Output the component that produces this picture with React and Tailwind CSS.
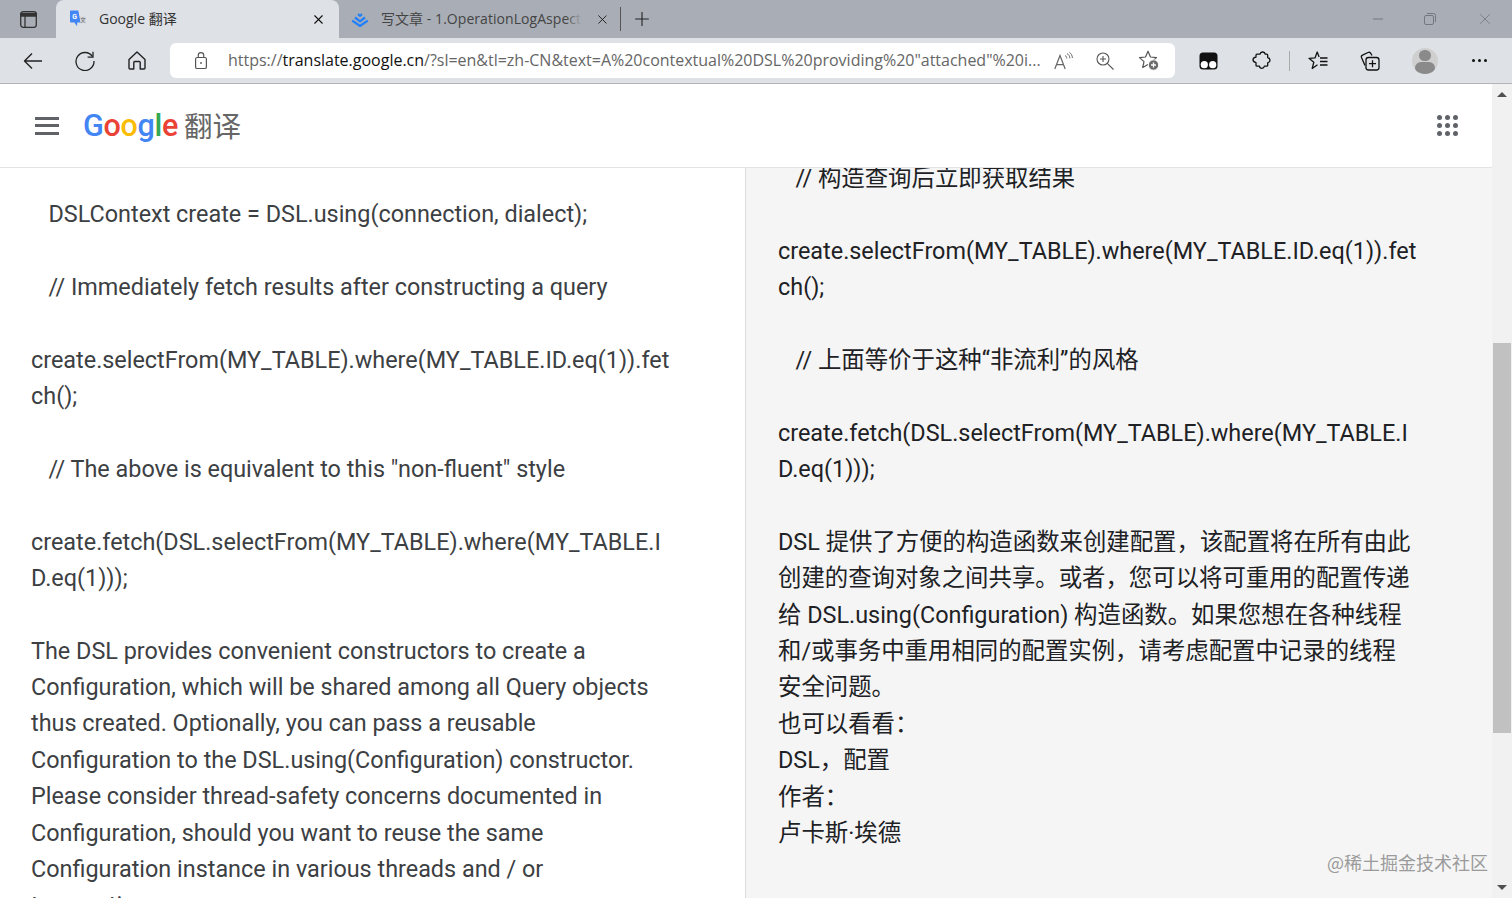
import React from 'react';
import { X, Plus, Minus } from 'lucide-react';

const leftLines = [
  '   DSLContext create = DSL.using(connection, dialect);',
  '',
  '   // Immediately fetch results after constructing a query',
  '',
  'create.selectFrom(MY_TABLE).where(MY_TABLE.ID.eq(1)).fet',
  'ch();',
  '',
  '   // The above is equivalent to this "non-fluent" style',
  '',
  'create.fetch(DSL.selectFrom(MY_TABLE).where(MY_TABLE.I',
  'D.eq(1)));',
  '',
  'The DSL provides convenient constructors to create a',
  'Configuration, which will be shared among all Query objects',
  'thus created. Optionally, you can pass a reusable',
  'Configuration to the DSL.using(Configuration) constructor.',
  'Please consider thread-safety concerns documented in',
  'Configuration, should you want to reuse the same',
  'Configuration instance in various threads and / or',
  'transactions.',
];

const rightLines = [
  '   // 构造查询后立即获取结果',
  '',
  'create.selectFrom(MY_TABLE).where(MY_TABLE.ID.eq(1)).fet',
  'ch();',
  '',
  '   // 上面等价于这种“非流利”的风格',
  '',
  'create.fetch(DSL.selectFrom(MY_TABLE).where(MY_TABLE.I',
  'D.eq(1)));',
  '',
  'DSL 提供了方便的构造函数来创建配置，该配置将在所有由此',
  '创建的查询对象之间共享。或者，您可以将可重用的配置传递',
  '给 DSL.using(Configuration) 构造函数。如果您想在各种线程',
  '和/或事务中重用相同的配置实例，请考虑配置中记录的线程',
  '安全问题。',
  '也可以看看：',
  'DSL，配置',
  '作者：',
  '卢卡斯·埃德',
];

const TextLines = ({ lines }) => (
  <>
    {lines.map((line, i) => (
      <div key={i} className="h-[36.4px] whitespace-pre">{line}</div>
    ))}
  </>
);

const TranslateFavicon = () => (
  <svg width="18" height="18" viewBox="0 0 18 18" className="shrink-0">
    <path d="M1 1.200c0-.5.300-.8.800-.8h7.500l2.200 12H8.300l-.3 3.800-2.600-3.800H1.800c-.5 0-.8-.3-.8-.8z" fill="#4285f4" />
    <path d="M10.800 6.500h6.200v6.500h-3l-1.200 1.800z" fill="#d5d7db" />
    <text x="3.200" y="9" fontSize="7" fontWeight="700" fill="#fff" fontFamily="Roboto, sans-serif">G</text>
    <text x="11.300" y="12" fontSize="5.500" fill="#5f6368" fontFamily="'Noto Sans CJK SC', sans-serif">文</text>
  </svg>
);

const JuejinLogo = () => (
  <svg width="18" height="15" viewBox="0 0 18 15" className="shrink-0" fill="none" stroke="#1e80ff" strokeWidth="2.200">
    <path d="M7 2.200 9 3.800l2-1.600" />
    <path d="M4 5.500 9 9.300l5-3.800" />
    <path d="M1.200 8.600 9 14l7.800-5.400" />
  </svg>
);

const TabIcon = () => (
  <svg width="17" height="17" viewBox="0 0 17 17" fill="none" stroke="#333" strokeWidth="1.300">
    <rect x="0.700" y="0.700" width="15.600" height="15.600" rx="2.500" />
    <path d="M1 2.500h15v2.500H1z" fill="#333" />
    <path d="M5 5v11" />
  </svg>
);

const BackIcon = () => (
  <svg width="20" height="18" viewBox="0 0 20 18" fill="none" stroke="#222" strokeWidth="1.400" strokeLinejoin="round">
    <path d="M19 9H1.500M9 1.500 1.500 9 9 16.500" />
  </svg>
);

const RefreshIcon = () => (
  <svg width="20" height="20" viewBox="0 0 20 20" fill="none" stroke="#222" strokeWidth="1.300">
    <path d="M17.500 5.500A9 9 0 1 0 19 10" />
    <path d="M18 .800v5.400h-5.400" />
  </svg>
);

const HomeIcon = () => (
  <svg width="18" height="19" viewBox="0 0 18 19" fill="none" stroke="#222" strokeWidth="1.400" strokeLinejoin="round">
    <path d="M1 8.500 9 1l8 7.500V17a1 1 0 0 1-1 1h-3.800v-6.500a1 1 0 0 0-1-1H6.800a1 1 0 0 0-1 1V18H2a1 1 0 0 1-1-1z" />
  </svg>
);

const LockIcon = () => (
  <svg width="14" height="18" viewBox="0 0 14 18" fill="none" stroke="#555" strokeWidth="1.200">
    <rect x="1.600" y="5.500" width="10.800" height="11" rx="1.600" />
    <path d="M4.300 5.500V3.300a2.700 2.700 0 0 1 5.400 0v2.200" />
    <circle cx="7" cy="11" r="0.900" fill="#555" stroke="none" />
  </svg>
);

const ReadAloudIcon = () => (
  <svg width="19" height="18" viewBox="0 0 19 18" fill="none" stroke="#666" strokeWidth="1.200">
    <path d="M.800 17 6 3.500 11.200 17M2.500 12.700h7" />
    <path d="M11 3.500c1.100.5 1.700 1.500 1.800 3M13 1.700c1.800.8 2.700 2.300 2.900 4.600M15.400.500c1.900 1.100 2.900 3 3 5.500" strokeWidth="1" />
  </svg>
);

const ZoomPlusIcon = () => (
  <svg width="18" height="18" viewBox="0 0 18 18" fill="none" stroke="#555" strokeWidth="1.100">
    <circle cx="7" cy="7" r="6" />
    <path d="M7 4v6M4 7h6M11.300 11.300 17.500 17.500" />
  </svg>
);

const FavAddIcon = () => (
  <svg width="22" height="21" viewBox="0 0 22 21" fill="none">
    <path d="M10 1.200 12.500 7l6 .6-4.500 4 1.300 5.900L10 14.500l-5.300 3 1.300-5.900-4.500-4 6-.6z" stroke="#555" strokeWidth="1.200" strokeLinejoin="round" />
    <circle cx="15.500" cy="15" r="5.200" fill="#6b6b6b" stroke="#fff" />
    <path d="M15.500 12.500v5M13 15h5" stroke="#fff" strokeWidth="1.300" />
  </svg>
);

const TamperIcon = () => (
  <svg width="19" height="18" viewBox="0 0 19 18">
    <rect x="0.500" y="0.500" width="18" height="17" rx="3.500" fill="#111" />
    <circle cx="5.300" cy="12.700" r="3.600" fill="#fff" />
    <circle cx="13.700" cy="12.700" r="3.600" fill="#fff" />
  </svg>
);

const PuzzleIcon = () => (
  <svg width="19" height="19" viewBox="0 0 19 19" fill="none" stroke="#111" strokeWidth="1.300" strokeLinejoin="round">
    <path d="M8 3.200C8.300 1.700 9.500.900 10.800 1c1.300.1 2.200 1 2.400 2.200h1.500c.6 0 1 .4 1 1v2.300c1.500.4 2.300 1.400 2.300 2.700 0 1.400-.8 2.300-2.300 2.700v2.300c0 .6-.4 1-1 1h-2.300c-.3 1.400-1.300 2.100-2.500 2.100s-2.300-.7-2.500-2.100H5c-.6 0-1-.4-1-1v-2.500C2.300 11.200 1 10.300 1 8.800c0-1.500 1.200-2.500 3-2.700V4.200c0-.6.400-1 1-1z" />
  </svg>
);

const FavListIcon = () => (
  <svg width="20" height="19" viewBox="0 0 20 19" fill="none" stroke="#111" strokeWidth="1.300" strokeLinejoin="round">
    <path d="M9.500 13.800 4.200 17.500l1.600-6.200L1 7.300l6-.4L9.200 1l1.900 5" />
    <path d="M12 7h7.500M12 10.500h7.500M12 14h7.500" />
  </svg>
);

const CollectionsIcon = () => (
  <svg width="20" height="20" viewBox="0 0 20 20" fill="none" stroke="#111" strokeWidth="1.300">
    <path d="M5 14.500 1.500 6.500c-.4-1 0-2 1-2.400l5.500-2.600c1.200-.5 2.400 0 2.900 1l1 2" />
    <rect x="6" y="6.500" width="13" height="12.500" rx="2.500" />
    <path d="M12.500 9.300v6.900M9 12.700h7" />
  </svg>
);

const AvatarIcon = () => (
  <div className="w-[26px] h-[26px] rounded-full bg-[#cfcfcf] overflow-hidden flex flex-col items-center">
    <div className="w-[12px] h-[12px] mt-[2px] rounded-full bg-[#8a8a8a]" />
    <div className="w-[20px] h-[12px] mt-[1px] rounded-full bg-[#8a8a8a]" />
  </div>
);

const RestoreIcon = () => (
  <svg width="12" height="12" viewBox="0 0 12 12" fill="none" stroke="#73787f" strokeWidth="1">
    <rect x="0.500" y="2.500" width="9" height="9" rx="1.500" />
    <path d="M3 .500h6.500a2 2 0 0 1 2 2V9" />
  </svg>
);

const AppsIcon = () => (
  <div className="grid grid-cols-3 gap-[3px]">
    {Array.from({ length: 9 }).map((_, i) => (
      <div key={i} className="w-[5px] h-[5px] rounded-full bg-[#5f6368]" />
    ))}
  </div>
);

export default function App() {
  return (
    <div className="h-[898px] w-[1512px] overflow-hidden flex flex-col bg-white font-['Roboto','Noto_Sans_CJK_SC',sans-serif]">
      {/* tab strip */}
      <div className="h-[38px] shrink-0 bg-[#a9aeb6] flex items-end">
        <div className="w-[56px] h-[38px] flex items-center pl-[20px]">
          <TabIcon />
        </div>
        <div className="w-[283px] h-[38px] bg-[#dee1e6] rounded-t-[8px] flex items-center pl-[13px] pr-[13px]">
          <TranslateFavicon />
          <span className="ml-[12px] mb-[1px] text-[14px] text-[#333] flex-1 font-['Open_Sans','Noto_Sans_CJK_SC',sans-serif]">Google 翻译</span>
          <X size={15} strokeWidth={1.800} className="text-[#111]" />
        </div>
        <div className="w-[282px] h-[38px] flex items-center pl-[12px]">
          <JuejinLogo />
          <div className="relative ml-[12px] mb-[1px] w-[203px] overflow-hidden whitespace-nowrap text-[14px] tracking-[0.05px] text-[#444] font-['Open_Sans','Noto_Sans_CJK_SC',sans-serif]">
            写文章 - 1.OperationLogAspect代
            <div className="absolute right-0 top-0 bottom-0 w-[16px] bg-gradient-to-r from-transparent to-[#a9aeb6]" />
          </div>
          <X size={15} strokeWidth={1.600} className="ml-[13px] text-[#222]" />
          <div className="ml-[10px] w-px h-[24px] bg-[#555]" />
        </div>
        <div className="h-[38px] flex items-center ml-[10px] mr-auto">
          <Plus size={22} strokeWidth={1.200} className="text-[#222]" />
        </div>
        <div className="h-[38px] flex items-center text-[#73787f]">
          <Minus size={16} strokeWidth={1.500} />
          <div className="ml-[38px]"><RestoreIcon /></div>
          <X size={18} strokeWidth={1.100} className="ml-[40px] mr-[18px]" />
        </div>
      </div>

      {/* toolbar */}
      <div className="h-[46px] shrink-0 bg-[#dee1e5] border-b border-[#b4b4b4] flex items-center">
        <div className="ml-[23px]"><BackIcon /></div>
        <div className="ml-[32px]"><RefreshIcon /></div>
        <div className="ml-[33px]"><HomeIcon /></div>
        <div className="ml-[24px] w-[1005px] h-[35px] rounded-[6px] bg-white flex items-center pl-[24px]">
          <LockIcon />
          <div className="ml-[20px] mb-[1px] w-[813px] overflow-hidden whitespace-nowrap text-[16px] text-[#666] font-['Open_Sans',sans-serif] tracking-[-0.01px]">
            https://<span className="text-[#111]">translate.google.cn</span>/?sl=en&amp;tl=zh-CN&amp;text=A%20contextual%20DSL%20providing%20"attached"%20i...
          </div>
          <div className="ml-[13px]"><ReadAloudIcon /></div>
          <div className="ml-[23px]"><ZoomPlusIcon /></div>
          <div className="ml-[24px]"><FavAddIcon /></div>
        </div>
        <div className="ml-[24px]"><TamperIcon /></div>
        <div className="ml-[34px]"><PuzzleIcon /></div>
        <div className="ml-[18px] w-px h-[20px] bg-[#a9a9a9]" />
        <div className="ml-[18px]"><FavListIcon /></div>
        <div className="ml-[32px]"><CollectionsIcon /></div>
        <div className="ml-[32px]"><AvatarIcon /></div>
        <div className="ml-[34px] flex gap-[3px]">
          <div className="w-[3px] h-[3px] rounded-full bg-[#111]" />
          <div className="w-[3px] h-[3px] rounded-full bg-[#111]" />
          <div className="w-[3px] h-[3px] rounded-full bg-[#111]" />
        </div>
      </div>

      <div className="flex-1 min-h-0 flex">
        <div className="flex-1 min-w-0 flex flex-col relative">
          {/* header */}
          <div className="h-[84px] shrink-0 bg-white border-b border-[#e3e3e3] flex items-center z-10">
            <div className="ml-[35px] flex flex-col gap-[4.500px]">
              <div className="w-[24px] h-[3px] bg-[#5f6368]" />
              <div className="w-[24px] h-[3px] bg-[#5f6368]" />
              <div className="w-[24px] h-[3px] bg-[#5f6368]" />
            </div>
            <div className="ml-[24px] text-[30.500px] font-medium leading-none tracking-[-0.3px] font-['Roboto',sans-serif] mt-[2px]">
              <span className="text-[#4285f4]">G</span>
              <span className="text-[#ea4335]">o</span>
              <span className="text-[#fbbc05]">o</span>
              <span className="text-[#4285f4]">g</span>
              <span className="text-[#34a853]">l</span>
              <span className="text-[#ea4335]">e</span>
            </div>
            <span className="ml-[6px] text-[28.500px] text-[#666] leading-none font-['Noto_Sans_CJK_SC',sans-serif]">翻译</span>
            <div className="ml-auto mr-[34px]"><AppsIcon /></div>
          </div>

          {/* panels */}
          <div className="flex-1 min-h-0 flex overflow-hidden text-[23.400px]">
            <div className="w-[746px] shrink-0 bg-white border-r border-[#dcdcdc] pl-[31px] pt-[29px] text-[#3c4043]">
              <TextLines lines={leftLines} />
            </div>
            <div className="flex-1 bg-[#f5f5f5] pl-[32px] -mt-[7px] text-[#202124]">
              <TextLines lines={rightLines} />
            </div>
          </div>

          <div className="absolute right-[4px] bottom-[24px] text-[18px] leading-[24px] text-[#9b9b9b] font-['Noto_Sans_CJK_SC',sans-serif]">
            @稀土掘金技术社区
          </div>
        </div>

        {/* scrollbar */}
        <div className="w-[20px] shrink-0 bg-[#f1f1f1] flex flex-col items-center">
          <div className="mt-[8px] w-0 h-0 border-x-[5px] border-x-transparent border-b-[5px] border-b-[#505050]" />
          <div className="mt-[246px] w-[18px] h-[390px] bg-[#c1c1c1]" />
          <div className="mt-auto mb-[8px] w-0 h-0 border-x-[5px] border-x-transparent border-t-[5px] border-t-[#505050]" />
        </div>
      </div>
    </div>
  );
}
